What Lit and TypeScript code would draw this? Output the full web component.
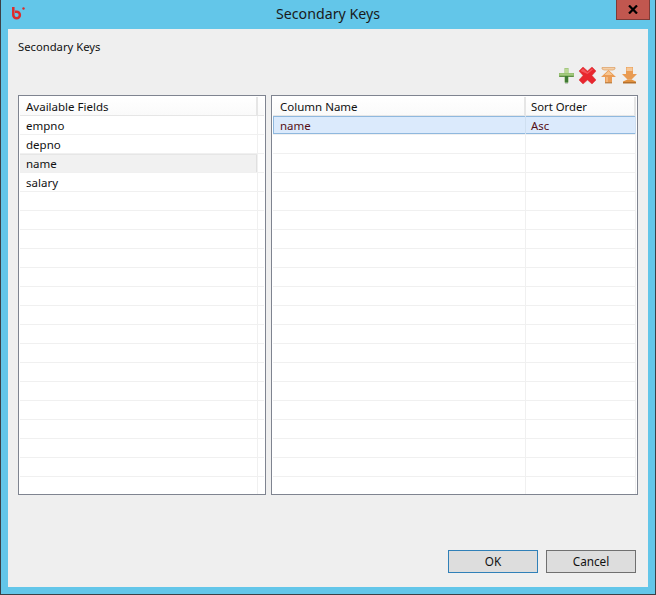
import { LitElement, html, css, svg } from "lit";
import { customElement } from "lit/decorators.js";

@customElement("app-root")
export class AppRoot extends LitElement {
  static styles = css`
    :host { display: block; width: 656px; height: 595px; font-family: "Noto Sans", sans-serif; font-size: 11.5px; color: #111; }
    * { box-sizing: border-box; }
    .win { width: 656px; height: 595px; background: #63c6e9; border: 1px solid #3b4046; border-top: 0; display: flex; flex-direction: column; padding: 0 7px 7px 7px; }
    .title { height: 29px; margin: 0 -7px; padding-left: 11px; display: flex; position: relative; align-items: flex-start; }
    .logo { margin-top: 6px; width: 14px; height: 14px; display: block; }
    .ttext { position: absolute; left: 0; right: 0; top: 4px; text-align: center; font-size: 14.2px; line-height: 20px; color: #1a1a1a; }
    .close { position: absolute; left: 615px; top: 0; width: 34px; height: 20px; background: #c1574f; border: 1px solid #7d3b37; border-top: 0; display: flex; align-items: center; justify-content: center; }
    .body { flex: 1; background: #efefef; padding: 10px 10px 14px 10px; display: flex; flex-direction: column; }
    .label { font-size: 11.25px; line-height: 16px; height: 16px; }
    .tools { display: flex; justify-content: flex-end; gap: 2px; height: 20px; margin-top: 11px; margin-right: -1px; margin-bottom: 9px; }
    .tools svg { width: 19px; height: 19px; display: block; }
    .tables { display: flex; gap: 5px; height: 400px; }
    .tbl { border: 1px solid #7f8490; background: #fff; padding: 1px; overflow: hidden; }
    .left { width: 248px; }
    .right { width: 367px; }
    .row { display: flex; height: 19px; border-bottom: 1px solid #f0f0f0; line-height: 20px; }
    .head { height: 19px; border-bottom: 1px solid #e6e6e6; background: linear-gradient(#fff, #fafafa); }
    .cell { padding-left: 6px; border-right: 1px solid #f0f0f0; white-space: nowrap; }
    .head .cell { border-right: 2px solid #e6e6e6; }
    .c-a { width: 238px; }
    .c-n { width: 253px; padding-left: 7px; }
    .c-s { width: 110px; padding-left: 5px; font-size: 11.3px; }
    .sel-grey { background: #f1f1f1; box-shadow: inset 0 1px 0 #e6e6e6, inset -1px 0 0 #e0e0e0; }
    .sel-blue { background: #dbeafc; color: #560f14; box-shadow: inset 0 0 0 1px #8fb8de; }
    .sel-blue .cell { border-right-color: #cfdff0; }
    .spacer { flex: 1; }
    .btns { display: flex; justify-content: flex-end; gap: 8px; padding-right: 2px; }
    .btn { width: 90px; height: 23px; background: #dddddd; border: 1px solid #707070; font: inherit; font-size: 11.75px; padding: 0 0 2px; color: #111; }
    .ok { border-color: #3080b8; }
  `;

  private plus() {
    return svg`<svg viewBox="0 0 19 19">
      <path d="M7.500 2h4v5h5.500v4h-5.500v5.500h-4V11H2V7h5.500z" fill="#8db96a"/>
      <path d="M8 2.500h3V7H8z" fill="#bcd994"/>
      <path d="M2.500 7.500h14V9h-14z" fill="#a5cb80"/>
      <path d="M2.500 10h14v1h-14z" fill="#5f8f46"/>
      <path d="M8 10h3v6.500H8z" fill="#3f7a34"/>
      <path d="M8 17h3v1H8z" fill="#999" opacity=".5"/>
    </svg>`;
  }
  private cross() {
    return svg`<svg viewBox="0 0 19 19">
      <path d="M1 5l4-4 4.500 4L14 1l4 4-4 4.500 4 4.500-4 4-4.500-4-4.500 4-4-4 4-4.500z" fill="#e8262e" stroke="#d9343a" stroke-width=".5"/>
      <path d="M2.500 5L5 2.500l4.500 4 4.500-4 1 1-5.500 4.500z" fill="#f4545a"/>
    </svg>`;
  }
  private up() {
    return svg`<svg viewBox="0 0 19 19">
      <path d="M3 1.500h13V3l-2 1H5L3 3z" fill="#f4cfa8" stroke="#dc9e60" stroke-width=".7"/>
      <path d="M9.500 4L17 11h-4v6H6v-6H2z" fill="#ea9c55"/>
      <path d="M9.500 5L13.500 9h-8z" fill="#f7c48e"/>
      <path d="M7 11h2v5H7z" fill="#f3b67a"/>
      <path d="M6 16h7v1.500H6z" fill="#b98044" opacity=".8"/>
    </svg>`;
  }
  private down() {
    return svg`<svg viewBox="0 0 19 19">
      <path d="M6 1h7v7h4l-5.500 5.500h-4L2 8h4z" fill="#e99b52"/>
      <path d="M6.500 1.500h6V5h-6z" fill="#f6c898"/>
      <path d="M7.500 13.500h4L16 15.500v1.500H3v-1.500z" fill="#e2913f"/>
      <path d="M3 16h13v1.500H3z" fill="#b4702c"/>
    </svg>`;
  }

  render() {
    const fields = ["empno", "depno", "name", "salary"];
    const leftRows = Array.from({ length: 20 }, (_, i) => fields[i] ?? "");
    const rightRows = Array.from({ length: 20 }, (_, i) => i);
    return html`
      <div class="win">
        <div class="title">
          <svg class="logo" viewBox="0 0 14 14">
            <path d="M1.300 1v8a3.300 3.300 0 1 0 3.300-3.300H3" fill="none" stroke="#dc2b2b" stroke-width="2.500"/>
            <circle cx="11.500" cy="2.500" r="1.200" fill="#dc2b2b"/>
          </svg>
          <div class="ttext">Secondary Keys</div>
          <div class="close">
            <svg width="10" height="9" viewBox="0 0 10 9"><path d="M1 .5l8 8M9 .5l-8 8" stroke="#000" stroke-width="2.200"/></svg>
          </div>
        </div>
        <div class="body">
          <div class="label">Secondary Keys</div>
          <div class="tools">${this.plus()}${this.cross()}${this.up()}${this.down()}</div>
          <div class="tables">
            <div class="tbl left">
              <div class="row head"><div class="cell c-a">Available Fields</div></div>
              ${leftRows.map(
                (f) => html`<div class="row"><div class="cell c-a ${f === "name" ? "sel-grey" : ""}">${f}</div></div>`
              )}
            </div>
            <div class="tbl right">
              <div class="row head">
                <div class="cell c-n">Column Name</div>
                <div class="cell c-s">Sort Order</div>
              </div>
              ${rightRows.map((i) =>
                i === 0
                  ? html`<div class="row sel-blue"><div class="cell c-n">name</div><div class="cell c-s">Asc</div></div>`
                  : html`<div class="row"><div class="cell c-n"></div><div class="cell c-s"></div></div>`
              )}
            </div>
          </div>
          <div class="spacer"></div>
          <div class="btns">
            <button class="btn ok">OK</button>
            <button class="btn">Cancel</button>
          </div>
        </div>
      </div>
    `;
  }
}
